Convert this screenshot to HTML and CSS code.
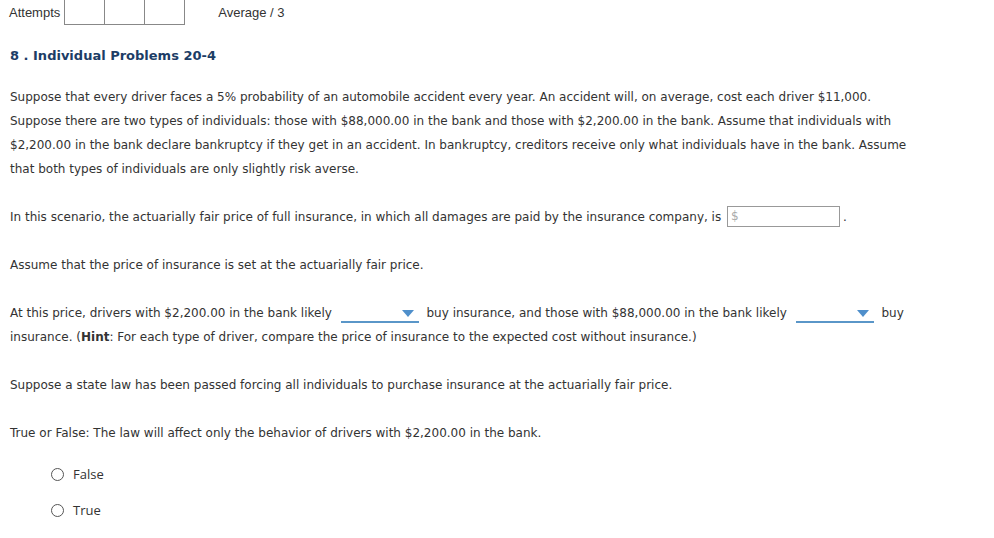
FILE: index.html
```html
<!DOCTYPE html>
<html>
<head>
<meta charset="utf-8">
<link rel="stylesheet" href="styles.css">
</head>
<body>
<div class="attempts-row">
  <span class="attempts-label">Attempts</span>
  <div class="boxes"><span class="box"></span><span class="box"></span><span class="box"></span></div>
  <span class="average">Average / 3</span>
</div>
<h2 class="title">8 . Individual Problems 20-4</h2>
<div class="content">
  <p>Suppose that every driver faces a 5% probability of an automobile accident every year. An accident will, on average, cost each driver $11,000. Suppose there are two types of individuals: those with $88,000.00 in the bank and those with $2,200.00 in the bank. Assume that individuals with $2,200.00 in the bank declare bankruptcy if they get in an accident. In bankruptcy, creditors receive only what individuals have in the bank. Assume that both types of individuals are only slightly risk averse.</p>
  <p>In this scenario, the actuarially fair price of full insurance, in which all damages are paid by the insurance company, is <span class="money"><span class="dollar">$</span></span>.</p>
  <p>Assume that the price of insurance is set at the actuarially fair price.</p>
  <p>At this price, drivers with $2,200.00 in the bank likely <span class="dropdown"><span class="arrow"></span></span> buy insurance, and those with $88,000.00 in the bank likely <span class="dropdown"><span class="arrow"></span></span> buy insurance. (<b>Hint</b>: For each type of driver, compare the price of insurance to the expected cost without insurance.)</p>
  <p>Suppose a state law has been passed forcing all individuals to purchase insurance at the actuarially fair price.</p>
  <p>True or False: The law will affect only the behavior of drivers with $2,200.00 in the bank.</p>
  <div class="options">
    <label class="option"><span class="radio"></span><span class="opt-text">False</span></label>
    <label class="option"><span class="radio"></span><span class="opt-text">True</span></label>
  </div>
</div>
</body>
</html>
```

FILE: styles.css
```css
body {
  margin: 0;
  background: #fff;
  color: #333;
  font-family: "DejaVu Sans", Verdana, sans-serif;
}
.attempts-row {
  display: flex;
  align-items: center;
  height: 25px;
  font-family: "Liberation Sans", Arial, sans-serif;
  font-size: 13px;
  color: #333;
}
.attempts-label {
  margin-left: 9px;
  margin-right: 4px;
}
.boxes {
  display: flex;
  height: 25px;
  border: 1px solid #888;
  border-top: none;
  box-sizing: border-box;
}
.box {
  width: 39px;
  border-right: 1px solid #888;
}
.box:last-child { border-right: none; }
.average {
  margin-left: 33px;
}
.title {
  margin: 21px 0 0 10px;
  font-size: 13px;
  font-weight: bold;
  color: #1c3d66;
  line-height: 20px;
}
.content {
  padding: 19px 10px 0 10px;
  font-size: 12px;
  line-height: 24px;
}
.content p {
  margin: 0 0 24px 0;
  max-width: 915px;
}
.money {
  display: inline-block;
  width: 111px;
  height: 19px;
  border: 1px solid #999;
  vertical-align: middle;
  line-height: 19px;
  margin: -2px 3px 0 2px;
}
.dollar {
  display: block;
  color: #aaa;
  margin-left: 3px;
  font-size: 12px;
  line-height: 19px;
}
.dropdown {
  display: inline-block;
  position: relative;
  width: 78px;
  height: 16px;
  border-bottom: 2px solid #5a96c8;
  vertical-align: middle;
  margin: 0 4px 0 5px;
}
.arrow {
  position: absolute;
  right: 5px;
  top: 5px;
  width: 0;
  height: 0;
  border-left: 6px solid transparent;
  border-right: 6px solid transparent;
  border-top: 7px solid #4f8fcb;
}
.options {
  display: flex;
  flex-direction: column;
  gap: 16px;
  margin-top: -5px;
  padding-left: 41px;
  font-family: "Open Sans", "Segoe UI", sans-serif;
  font-size: 13px;
}
.option {
  display: flex;
  align-items: center;
  height: 20px;
}
.radio {
  width: 11px;
  height: 11px;
  border: 1px solid #555;
  border-radius: 50%;
  margin-right: 9px;
}
```
